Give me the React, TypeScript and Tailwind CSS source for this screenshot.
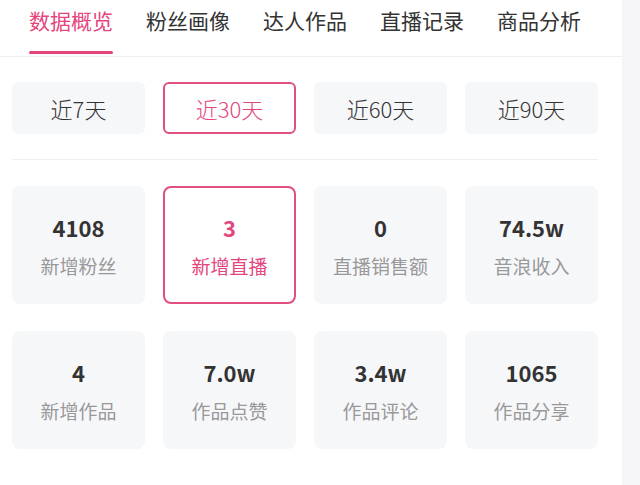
import React from "react";

const tabs = ["数据概览", "粉丝画像", "达人作品", "直播记录", "商品分析"];
const periods = ["近7天", "近30天", "近60天", "近90天"];
const stats = [
  { v: "4108", l: "新增粉丝" },
  { v: "3", l: "新增直播", active: true },
  { v: "0", l: "直播销售额" },
  { v: "74.5w", l: "音浪收入" },
  { v: "4", l: "新增作品" },
  { v: "7.0w", l: "作品点赞" },
  { v: "3.4w", l: "作品评论" },
  { v: "1065", l: "作品分享" },
];

export default function App() {
  return (
    <div
      className="flex w-[640px] h-[485px] overflow-hidden bg-white"
      style={{ fontFamily: '"Noto Sans CJK SC", "Noto Sans", sans-serif' }}
    >
      <div className="w-[622px] flex flex-col">
        <div className="flex gap-[33px] pl-[29px] border-b border-[#efefef] h-[57px]">
          {tabs.map((t, i) => (
            <div key={t} className="flex flex-col">
              <div
                className={`text-[21px] leading-[28px] mt-[6px] ${
                  i === 0 ? "text-[#e5457d]" : "text-[#333333]"
                }`}
              >
                {t}
              </div>
              {i === 0 && <div className="mt-[17px] h-[3px] rounded-full bg-[#e5457d]" />}
            </div>
          ))}
        </div>
        <div className="px-[12px] pr-[24px]">
          <div className="grid grid-cols-4 gap-[18px] mt-[25px]">
            {periods.map((p, i) => (
              <div
                key={p}
                className={`h-[52px] rounded-[6px] flex items-center justify-center text-[22px] font-light ${
                  i === 1
                    ? "border-2 border-[#e0507f] text-[#e5457d] bg-white"
                    : "bg-[#f6f7f9] text-[#333333]"
                }`}
              >
                {p}
              </div>
            ))}
          </div>
          <div className="h-px bg-[#efefef] mt-[25px]" />
          <div className="grid grid-cols-4 gap-x-[18px] gap-y-[27px] mt-[26px]">
            {stats.map((s) => (
              <div
                key={s.l}
                className={`h-[118px] rounded-[8px] flex flex-col items-center justify-center ${
                  s.active ? "border-2 border-[#e0507f] bg-white" : "bg-[#f6f7f9]"
                }`}
              >
                <div
                  className={`text-[22px] font-bold leading-[28px] ${
                    s.active ? "text-[#e5457d]" : "text-[#333333]"
                  }`}
                >
                  {s.v}
                </div>
                <div
                  className={`text-[19px] leading-[24px] mt-[13px] ${
                    s.active ? "text-[#e5457d]" : "text-[#999999]"
                  }`}
                >
                  {s.l}
                </div>
              </div>
            ))}
          </div>
        </div>
      </div>
      <div className="flex-1 bg-[#f5f5f7]" />
    </div>
  );
}
